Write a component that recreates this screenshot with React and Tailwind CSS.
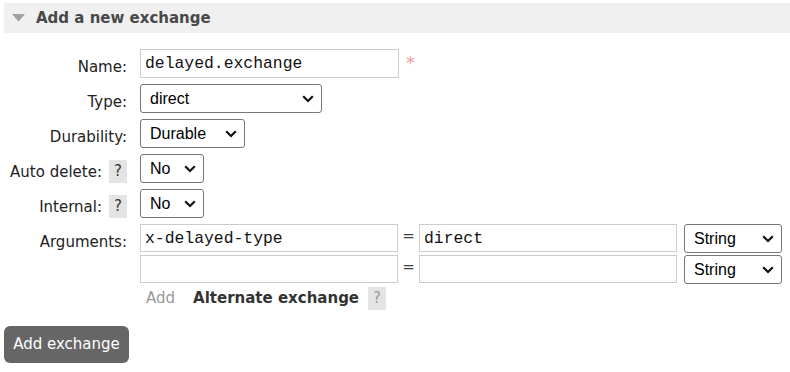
import React from 'react';

const Help = ({ muted }) => (
  <span
    className={`inline-flex w-[18px] h-[23px] items-center justify-center bg-[#e4e4e4] text-[15px] ${
      muted ? 'text-[#9a9a9a]' : 'text-[#333]'
    }`}
  >
    ?
  </span>
);

const Chevron = () => (
  <svg
    className="pointer-events-none absolute right-[8px] top-1/2 -translate-y-1/2"
    width="12"
    height="8"
    viewBox="0 0 12 8"
    fill="none"
  >
    <path d="M1.2 1.2L6 6l4.8-4.8" stroke="#111" strokeWidth="2.2" />
  </svg>
);

const Select = ({ value, options, width }) => (
  <div className={`relative h-[29px] ${width}`}>
    <select
      defaultValue={value}
      className="appearance-none w-full h-full border border-[#767676] rounded-[3px] bg-white pl-[9px] pr-[24px] text-[16px] text-black font-['Liberation_Sans',Arial,sans-serif] outline-none"
    >
      {options.map(o => (
        <option key={o}>{o}</option>
      ))}
    </select>
    <Chevron />
  </div>
);

const TextInput = ({ value }) => (
  <input
    defaultValue={value}
    className="w-[258px] h-[28px] border border-[#cccccc] bg-white px-[4px] text-[16.4px] text-[#111] font-['Liberation_Mono','Courier_New',monospace] outline-none"
  />
);

const Row = ({ label, help, children }) => (
  <div className="flex">
    <div className="w-[127px] shrink-0 flex justify-end">
      {help ? (
        <div className="flex items-start gap-[7px]">
          <span className="pt-[10px] leading-[17px]">{label}</span>
          <span className="pt-[6px]">
            <Help />
          </span>
        </div>
      ) : (
        <span className="pt-[10px] leading-[17px]">{label}</span>
      )}
    </div>
    <div className="ml-[13px] flex items-start">{children}</div>
  </div>
);

export default function App() {
  return (
    <div className="w-[790px] h-[372px] bg-white pt-[3px] text-[15px] text-[#222] font-['DejaVu_Sans',Verdana,sans-serif]">
      {/* section header */}
      <div className="ml-[4px] h-[30px] bg-[#f0f0f0] flex items-center">
        <svg className="ml-[8px]" width="13" height="8" viewBox="0 0 13 8">
          <path d="M0 0h13L6.5 7.5z" fill="#a0a0a0" />
        </svg>
        <h2 className="ml-[11px] font-bold text-[15px] text-[#484848]">Add a new exchange</h2>
      </div>

      <div className="mt-[16px] flex flex-col gap-[6px]">
        <Row label="Name:">
          <input
            defaultValue="delayed.exchange"
            className="w-[259px] h-[29px] border border-[#cccccc] bg-white px-[4px] text-[16.4px] text-[#111] font-['Liberation_Mono','Courier_New',monospace] outline-none"
          />
          <span className="ml-[7px] pt-[4px] text-[18px] leading-[20px] text-[#f39a9a]">*</span>
        </Row>
        <Row label="Type:">
          <Select value="direct" width="w-[182px]" options={['direct', 'fanout', 'headers', 'topic', 'x-delayed-message']} />
        </Row>
        <Row label="Durability:">
          <Select value="Durable" width="w-[105px]" options={['Durable', 'Transient']} />
        </Row>
        <Row label="Auto delete:" help>
          <Select value="No" width="w-[64px]" options={['No', 'Yes']} />
        </Row>
        <Row label="Internal:" help>
          <Select value="No" width="w-[64px]" options={['No', 'Yes']} />
        </Row>
        <Row label="Arguments:">
          <div className="flex flex-col gap-[2px]">
            {[
              ['x-delayed-type', 'direct'],
              ['', ''],
            ].map(([k, v], i) => (
              <div key={i} className="flex items-start">
                <TextInput value={k} />
                <span className="w-[21px] pt-[4px] text-center text-[#444] leading-[17px]">=</span>
                <TextInput value={v} />
                <div className="ml-[7px]">
                  <Select value="String" width="w-[98px]" options={['String', 'Number', 'Boolean', 'List']} />
                </div>
              </div>
            ))}
            <div className="mt-[1px] flex items-center">
              <span className="ml-[6px] text-[#999]">Add</span>
              <span className="ml-[18px] font-bold text-[#333]">Alternate exchange</span>
              <span className="ml-[9px] inline-flex">
                <Help muted />
              </span>
            </div>
          </div>
        </Row>
      </div>

      <button className="ml-[4px] mt-[16px] w-[125px] h-[37px] rounded-[6px] bg-[#666] text-white text-[15px]">
        Add exchange
      </button>
    </div>
  );
}
